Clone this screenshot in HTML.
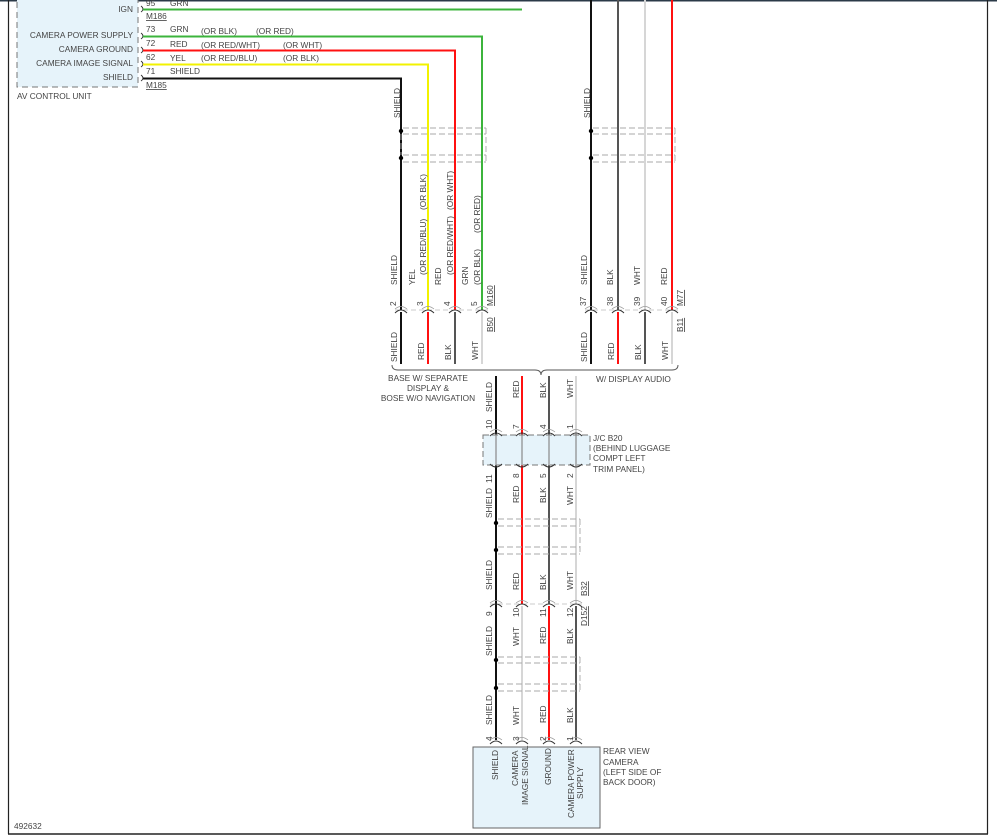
<!DOCTYPE html>
<html><head><meta charset="utf-8"><style>
html,body{margin:0;padding:0;background:#fff;}
svg{display:block;}
text{font-family:"Liberation Sans",Arial,sans-serif;font-size:8.3px;fill:#444;}
</style></head><body>
<svg width="997" height="836" viewBox="0 0 997 836" xmlns="http://www.w3.org/2000/svg">
<defs>
<g id="cn"><path d="M-6 3 Q0 -3 6 3" fill="none" stroke="#333" stroke-width="1"/><path d="M-6 -1 Q0 -6 6 -1" fill="none" stroke="#999" stroke-width="0.8"/></g>
<g id="cnu"><path d="M-6 -3 Q0 3 6 -3" fill="none" stroke="#333" stroke-width="1"/></g>
</defs>
<rect x="0" y="0" width="997" height="836" fill="#fff"/>
<line x1="0" y1="0.5" x2="997" y2="0.5" stroke="#2b3a48" stroke-width="2"/>
<line x1="8.5" y1="0" x2="8.5" y2="834" stroke="#222" stroke-width="1.2"/>
<line x1="987.5" y1="0" x2="987.5" y2="834" stroke="#222" stroke-width="1.2"/>
<line x1="8" y1="834" x2="988" y2="834" stroke="#222" stroke-width="1.5"/>

<rect x="17" y="-2" width="121" height="89" fill="#e6f3fa" stroke="#777" stroke-dasharray="6,4"/>
<text x="17" y="99">AV CONTROL UNIT</text>
<g text-anchor="end">
<text x="133" y="12">IGN</text>
<text x="133" y="38">CAMERA POWER SUPPLY</text>
<text x="133" y="52">CAMERA GROUND</text>
<text x="133" y="66">CAMERA IMAGE SIGNAL</text>
<text x="133" y="80">SHIELD</text>
</g>
<g fill="none" stroke="#333" stroke-width="0.9">
<path d="M141 6 Q145 9 141 12"/><path d="M141 33 Q145 36 141 39"/><path d="M141 47 Q145 50 141 53"/><path d="M141 61 Q145 64 141 67"/><path d="M141 75 Q145 78 141 81"/>
</g>
<text x="146" y="6">95</text><text x="170" y="6">GRN</text>
<text x="146" y="19" text-decoration="underline">M186</text>
<text x="146" y="32">73</text><text x="170" y="32">GRN</text><text x="201" y="34">(OR BLK)</text><text x="256" y="34">(OR RED)</text>
<text x="146" y="46">72</text><text x="170" y="47">RED</text><text x="201" y="48">(OR RED/WHT)</text><text x="283" y="48">(OR WHT)</text>
<text x="146" y="60">62</text><text x="170" y="61">YEL</text><text x="201" y="61">(OR RED/BLU)</text><text x="283" y="61">(OR BLK)</text>
<text x="146" y="74">71</text><text x="170" y="74">SHIELD</text>
<text x="146" y="88" text-decoration="underline">M185</text>

<g fill="none" stroke-width="2">
<path d="M143 9.5 H522" stroke="#3cb43c"/>
<path d="M143 36.5 H482 V310" stroke="#3cb43c"/>
<path d="M143 50.5 H455 V310" stroke="#ff1010"/>
<path d="M143 64.5 H428 V310" stroke="#f2f200"/>
<path d="M143 78.5 H401 V310" stroke="#111"/>
</g>
<g stroke-width="2">
<line x1="591" y1="0" x2="591" y2="310" stroke="#111"/>
<line x1="618" y1="0" x2="618" y2="310" stroke="#555"/>
<line x1="645" y1="0" x2="645" y2="310" stroke="#d6d6d6"/>
<line x1="672" y1="0" x2="672" y2="310" stroke="#ff1010"/>
<line x1="401" y1="312" x2="401" y2="364" stroke="#111"/>
<line x1="428" y1="312" x2="428" y2="364" stroke="#ff1010"/>
<line x1="455" y1="312" x2="455" y2="364" stroke="#555"/>
<line x1="482" y1="312" x2="482" y2="364" stroke="#d6d6d6"/>
<line x1="591" y1="312" x2="591" y2="364" stroke="#111"/>
<line x1="618" y1="312" x2="618" y2="364" stroke="#ff1010"/>
<line x1="645" y1="312" x2="645" y2="364" stroke="#555"/>
<line x1="672" y1="312" x2="672" y2="364" stroke="#d6d6d6"/>
<line x1="496" y1="376" x2="496" y2="740" stroke="#111"/>
<line x1="522" y1="376" x2="522" y2="604" stroke="#ff1010"/>
<line x1="549" y1="376" x2="549" y2="604" stroke="#555"/>
<line x1="576" y1="376" x2="576" y2="604" stroke="#d6d6d6"/>
<line x1="522" y1="606" x2="522" y2="740" stroke="#d6d6d6"/>
<line x1="549" y1="606" x2="549" y2="740" stroke="#ff1010"/>
<line x1="576" y1="606" x2="576" y2="740" stroke="#555"/>
</g>

<g fill="none" stroke="#aaa" stroke-dasharray="6,3" stroke-width="0.9">
<line x1="403" y1="128" x2="486" y2="128"/><line x1="403" y1="134" x2="486" y2="134"/>
<line x1="403" y1="155" x2="486" y2="155"/><line x1="403" y1="162" x2="486" y2="162"/>
<line x1="486" y1="128" x2="486" y2="162"/><line x1="401" y1="134" x2="401" y2="155"/>
<line x1="593" y1="128" x2="675" y2="128"/><line x1="593" y1="134" x2="675" y2="134"/>
<line x1="593" y1="155" x2="675" y2="155"/><line x1="593" y1="162" x2="675" y2="162"/>
<line x1="675" y1="128" x2="675" y2="162"/>
<line x1="498" y1="519" x2="580" y2="519"/><line x1="498" y1="526" x2="580" y2="526"/>
<line x1="498" y1="547" x2="580" y2="547"/><line x1="498" y1="554" x2="580" y2="554"/>
<line x1="580" y1="519" x2="580" y2="554"/>
<line x1="498" y1="657" x2="580" y2="657"/><line x1="498" y1="663" x2="580" y2="663"/>
<line x1="498" y1="684" x2="580" y2="684"/><line x1="498" y1="691" x2="580" y2="691"/>
<line x1="580" y1="657" x2="580" y2="691"/>
</g>
<g fill="#000">
<circle cx="401" cy="131" r="2.2"/><circle cx="401" cy="158" r="2.2"/>
<circle cx="591" cy="131" r="2.2"/><circle cx="591" cy="158" r="2.2"/>
<circle cx="496" cy="523" r="2.2"/><circle cx="496" cy="550" r="2.2"/>
<circle cx="496" cy="660" r="2.2"/><circle cx="496" cy="688" r="2.2"/>
</g>

<g stroke="#bbb" stroke-dasharray="5,3" stroke-width="0.8">
<line x1="395" y1="310" x2="490" y2="310"/><line x1="585" y1="310" x2="680" y2="310"/>
<line x1="490" y1="604" x2="582" y2="604"/>
</g>
<use href="#cn" x="401" y="310"/><use href="#cn" x="428" y="310"/><use href="#cn" x="455" y="310"/><use href="#cn" x="482" y="310"/>
<use href="#cn" x="591" y="310"/><use href="#cn" x="618" y="310"/><use href="#cn" x="645" y="310"/><use href="#cn" x="672" y="310"/>
<use href="#cn" x="496" y="604"/><use href="#cn" x="522" y="604"/><use href="#cn" x="549" y="604"/><use href="#cn" x="576" y="604"/>
<use href="#cn" x="496" y="741"/><use href="#cn" x="522" y="741"/><use href="#cn" x="549" y="741"/><use href="#cn" x="576" y="741"/>

<g>
<text transform="translate(400,118) rotate(-90)">SHIELD</text>
<text transform="translate(590,118) rotate(-90)">SHIELD</text>
<text transform="translate(397,285) rotate(-90)">SHIELD</text>
<text transform="translate(415,285) rotate(-90)">YEL</text>
<text transform="translate(426,275) rotate(-90)">(OR RED/BLU)</text>
<text transform="translate(426,210) rotate(-90)">(OR BLK)</text>
<text transform="translate(441,285) rotate(-90)">RED</text>
<text transform="translate(453,275) rotate(-90)">(OR RED/WHT)</text>
<text transform="translate(453,210) rotate(-90)">(OR WHT)</text>
<text transform="translate(468,285) rotate(-90)">GRN</text>
<text transform="translate(480,285) rotate(-90)">(OR BLK)</text>
<text transform="translate(480,233) rotate(-90)">(OR RED)</text>
<text transform="translate(396,306) rotate(-90)">2</text>
<text transform="translate(423,306) rotate(-90)">3</text>
<text transform="translate(450,306) rotate(-90)">4</text>
<text transform="translate(477,306) rotate(-90)">5</text>
<text transform="translate(493,306) rotate(-90)" text-decoration="underline">M160</text>
<text transform="translate(493,332) rotate(-90)" text-decoration="underline">B50</text>
<text transform="translate(587,285) rotate(-90)">SHIELD</text>
<text transform="translate(613,285) rotate(-90)">BLK</text>
<text transform="translate(640,285) rotate(-90)">WHT</text>
<text transform="translate(667,285) rotate(-90)">RED</text>
<text transform="translate(586,306) rotate(-90)">37</text>
<text transform="translate(613,306) rotate(-90)">38</text>
<text transform="translate(640,306) rotate(-90)">39</text>
<text transform="translate(667,306) rotate(-90)">40</text>
<text transform="translate(683,306) rotate(-90)" text-decoration="underline">M77</text>
<text transform="translate(683,332) rotate(-90)" text-decoration="underline">B11</text>
<text transform="translate(397,362) rotate(-90)">SHIELD</text>
<text transform="translate(424,360) rotate(-90)">RED</text>
<text transform="translate(451,360) rotate(-90)">BLK</text>
<text transform="translate(478,360) rotate(-90)">WHT</text>
<text transform="translate(587,362) rotate(-90)">SHIELD</text>
<text transform="translate(614,360) rotate(-90)">RED</text>
<text transform="translate(641,360) rotate(-90)">BLK</text>
<text transform="translate(668,360) rotate(-90)">WHT</text>
<text transform="translate(492,412) rotate(-90)">SHIELD</text>
<text transform="translate(519,398) rotate(-90)">RED</text>
<text transform="translate(546,398) rotate(-90)">BLK</text>
<text transform="translate(573,398) rotate(-90)">WHT</text>
<text transform="translate(492,429) rotate(-90)">10</text>
<text transform="translate(519,429) rotate(-90)">7</text>
<text transform="translate(546,429) rotate(-90)">4</text>
<text transform="translate(573,429) rotate(-90)">1</text>
<text transform="translate(492,483) rotate(-90)">11</text>
<text transform="translate(519,478) rotate(-90)">8</text>
<text transform="translate(546,478) rotate(-90)">5</text>
<text transform="translate(573,478) rotate(-90)">2</text>
<text transform="translate(492,518) rotate(-90)">SHIELD</text>
<text transform="translate(519,503) rotate(-90)">RED</text>
<text transform="translate(546,503) rotate(-90)">BLK</text>
<text transform="translate(573,505) rotate(-90)">WHT</text>
<text transform="translate(492,590) rotate(-90)">SHIELD</text>
<text transform="translate(519,590) rotate(-90)">RED</text>
<text transform="translate(546,590) rotate(-90)">BLK</text>
<text transform="translate(573,590) rotate(-90)">WHT</text>
<text transform="translate(587,596) rotate(-90)" text-decoration="underline">B32</text>
<text transform="translate(492,616) rotate(-90)">9</text>
<text transform="translate(519,617) rotate(-90)">10</text>
<text transform="translate(546,617) rotate(-90)">11</text>
<text transform="translate(573,617) rotate(-90)">12</text>
<text transform="translate(587,626) rotate(-90)" text-decoration="underline">D152</text>
<text transform="translate(492,656) rotate(-90)">SHIELD</text>
<text transform="translate(519,646) rotate(-90)">WHT</text>
<text transform="translate(546,644) rotate(-90)">RED</text>
<text transform="translate(573,644) rotate(-90)">BLK</text>
<text transform="translate(492,725) rotate(-90)">SHIELD</text>
<text transform="translate(519,725) rotate(-90)">WHT</text>
<text transform="translate(546,723) rotate(-90)">RED</text>
<text transform="translate(573,723) rotate(-90)">BLK</text>
<text transform="translate(492,741) rotate(-90)">4</text>
<text transform="translate(519,741) rotate(-90)">3</text>
<text transform="translate(546,741) rotate(-90)">2</text>
<text transform="translate(573,741) rotate(-90)">1</text>
</g>

<path d="M392 365 Q392 370 398 370 H535 Q541 370 541 375 Q541 370 547 370 H672 Q678 370 678 365" fill="none" stroke="#555" stroke-width="0.9"/>
<g text-anchor="middle">
<text x="428" y="381">BASE W/ SEPARATE</text>
<text x="428" y="391">DISPLAY &amp;</text>
<text x="428" y="401">BOSE W/O NAVIGATION</text>
</g>
<text x="596" y="382">W/ DISPLAY AUDIO</text>

<rect x="483" y="435" width="107" height="30" fill="#e6f3fa" stroke="#777" stroke-dasharray="6,3"/>
<g stroke="#888" stroke-width="1.2">
<line x1="496" y1="434" x2="496" y2="466"/><line x1="522" y1="434" x2="522" y2="466"/><line x1="549" y1="434" x2="549" y2="466"/><line x1="576" y1="434" x2="576" y2="466"/>
</g>
<use href="#cn" x="496" y="433"/><use href="#cn" x="522" y="433"/><use href="#cn" x="549" y="433"/><use href="#cn" x="576" y="433"/>
<use href="#cnu" x="496" y="467"/><use href="#cnu" x="522" y="467"/><use href="#cnu" x="549" y="467"/><use href="#cnu" x="576" y="467"/>
<text x="593" y="441">J/C B20</text>
<text x="593" y="451">(BEHIND LUGGAGE</text>
<text x="593" y="461">COMPT LEFT</text>
<text x="593" y="472">TRIM PANEL)</text>

<rect x="473" y="747" width="127" height="81" fill="#e6f3fa" stroke="#666" stroke-width="1"/>
<text transform="translate(498,780) rotate(-90)">SHIELD</text>
<text transform="translate(518,786) rotate(-90)">CAMERA</text>
<text transform="translate(528,805) rotate(-90)">IMAGE SIGNAL</text>
<text transform="translate(551,785) rotate(-90)">GROUND</text>
<text transform="translate(574,818) rotate(-90)">CAMERA POWER</text>
<text transform="translate(583,799) rotate(-90)">SUPPLY</text>
<text x="603" y="754">REAR VIEW</text>
<text x="603" y="765">CAMERA</text>
<text x="603" y="775">(LEFT SIDE OF</text>
<text x="603" y="785">BACK DOOR)</text>

<text x="14" y="829">492632</text>
</svg>
</body></html>
